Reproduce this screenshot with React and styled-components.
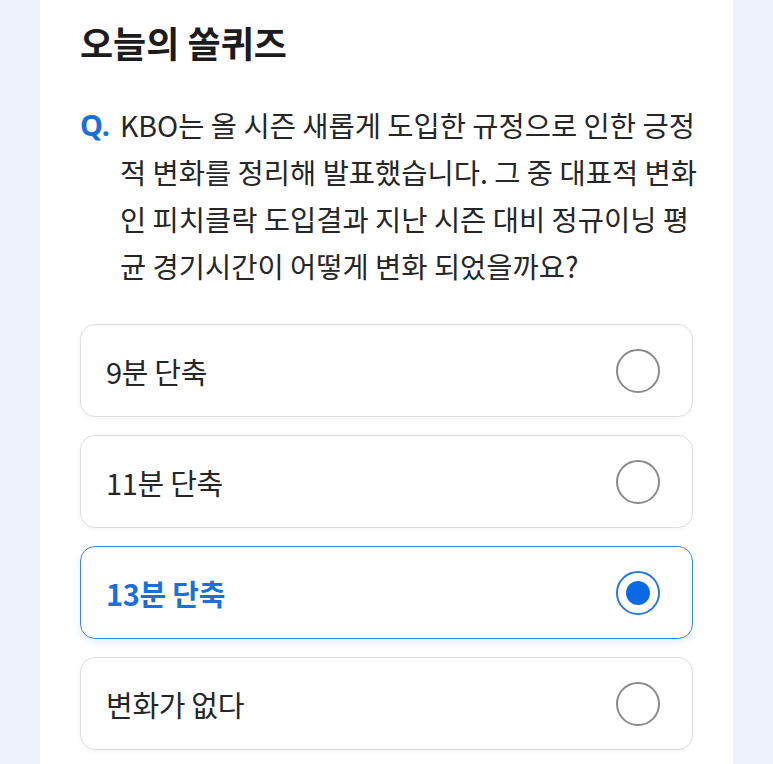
import styled, { createGlobalStyle } from 'styled-components'

const BLUE = '#1b6fd6';
const BG = '#eef2fa';

const GlobalStyle = createGlobalStyle`
  html, body {
    margin: 0;
    padding: 0;
    background: ${BG};
  }
  body {
    font-family: 'Noto Sans CJK KR', 'Noto Sans', sans-serif;
    color: #222;
  }
`

const Page = styled.div`
  width: 773px;
  height: 764px;
  overflow: hidden;
  background: ${BG};
  padding-left: 40px;
  box-sizing: border-box;
  display: flex;
`
const Card = styled.main`
  width: 693px;
  background: #fff;
  padding: 20px 40px 0;
  box-sizing: border-box;
`
const Title = styled.h1`
  margin: 0;
  font-size: 36px;
  line-height: 44px;
  font-weight: 700;
  color: #1c1c1c;
`
const Question = styled.div`
  display: flex;
  margin-top: 37px;
  gap: 10px;
`
const QMark = styled.span`
  flex: 0 0 28px;
  font-size: 29px;
  line-height: 47px;
  font-weight: 700;
  color: ${BLUE};
  font-family: 'Noto Sans', 'Noto Sans CJK KR', sans-serif;
`
const QText = styled.p`
  margin: 0;
  font-size: 28.5px;
  line-height: 47px;
  color: #262626;
  white-space: nowrap;
`
const Options = styled.ul`
  list-style: none;
  margin: 35px 0 0;
  padding: 0;
  display: flex;
  flex-direction: column;
  gap: 18px;
`
const Option = styled.li`
  height: 93px;
  box-sizing: border-box;
  border: 1.5px solid ${p => (p.$selected ? '#3a85d8' : '#dcdde0')};
  border-radius: 15px;
  padding: 0 32px 0 25px;
  display: flex;
  align-items: center;
  justify-content: space-between;
  box-shadow: ${p => (p.$selected ? '0 3px 8px rgba(27, 111, 214, 0.12)' : '0 2px 5px rgba(0, 0, 0, 0.04)')};
`
const Label = styled.span`
  font-size: 29px;
  color: ${p => (p.$selected ? BLUE : '#262626')};
  font-weight: ${p => (p.$selected ? 600 : 400)};
  letter-spacing: -0.3px;
`
const Radio = styled.span`
  width: 44px;
  height: 44px;
  box-sizing: border-box;
  border-radius: 50%;
  border: 2px solid ${p => (p.$selected ? '#2a78d8' : '#8a8a8c')};
  display: flex;
  align-items: center;
  justify-content: center;
  &::after {
    content: '';
    width: 24px;
    height: 24px;
    border-radius: 50%;
    background: ${p => (p.$selected ? '#0a6ae6' : 'transparent')};
  }
`

const options = ['9분 단축', '11분 단축', '13분 단축', '변화가 없다'];

const App = () => {
  const selected = 2;
  return (
    <Page>
      <GlobalStyle />
      <Card>
        <Title>오늘의 쏠퀴즈</Title>
        <Question>
          <QMark>Q.</QMark>
          <QText>
            KBO는 올 시즌 새롭게 도입한 규정으로 인한 긍정<br />
            적 변화를 정리해 발표했습니다. 그 중 대표적 변화<br />
            인 피치클락 도입결과 지난 시즌 대비 정규이닝 평<br />
            균 경기시간이 어떻게 변화 되었을까요?
          </QText>
        </Question>
        <Options>
          {options.map((o, i) => (
            <Option key={o} $selected={i === selected}>
              <Label $selected={i === selected}>{o}</Label>
              <Radio $selected={i === selected} />
            </Option>
          ))}
        </Options>
      </Card>
    </Page>
  );
};

export default App;
